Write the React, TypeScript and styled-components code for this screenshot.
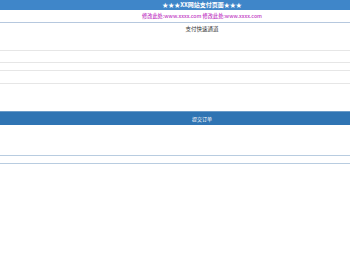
import React from 'react';
import styled, { createGlobalStyle } from 'styled-components';

const GlobalStyle = createGlobalStyle`
  body {
    margin: 0;
    background: #ffffff;
    font-family: 'Noto Sans CJK SC', 'Liberation Sans', sans-serif;
  }
`;

// centred text of the original sits right of the window middle
const textShift = '54px';

const Page = styled.div`
  width: 350px;
  display: flex;
  flex-direction: column;
`;

const Header = styled.div`
  height: 10px;
  padding-left: ${textShift};
  background: #3f86c9;
  color: #ffffff;
  font-size: 6px;
  font-weight: bold;
  line-height: 10px;
  text-align: center;
`;

const Notice = styled.div`
  height: 12px;
  padding-left: ${textShift};
  line-height: 11px;
  border-bottom: 1px solid #b6c8de;
  color: #bf38c4;
  font-size: 5.2px;
  font-weight: 500;
  text-align: center;
`;

const Title = styled.div`
  height: 14px;
  padding-left: ${textShift};
  line-height: 12px;
  color: #333333;
  font-size: 5.5px;
  text-align: center;
`;

const Row = styled.div<{ $h: number }>`
  height: ${(p) => p.$h}px;
  border-bottom: 1px solid #e6e6e6;
`;

const SubmitBar = styled.div`
  margin-top: 27px;
  height: 13px;
  padding-left: ${textShift};
  line-height: 13px;
  background: #2f74b3;
  border-top: 1px solid #6a9bc8;
  color: #ffffff;
  font-size: 5px;
  text-align: center;
`;

const Line = styled.div<{ $h: number }>`
  height: ${(p) => p.$h}px;
  border-bottom: 1px solid #b8cce0;
`;

export default function App() {
  return (
    <>
      <GlobalStyle />
      <Page>
        <Header>★★★XX网站支付页面★★★</Header>
        <Notice>修改此处:www.xxxx.com 修改此处:www.xxxx.com</Notice>
        <Title>支付快速通道</Title>
        <Row $h={13} />
        <Row $h={11} />
        <Row $h={7} />
        <Row $h={12} />
        <SubmitBar>提交订单</SubmitBar>
        <Line $h={30} />
        <Line $h={7} />
      </Page>
    </>
  );
}
